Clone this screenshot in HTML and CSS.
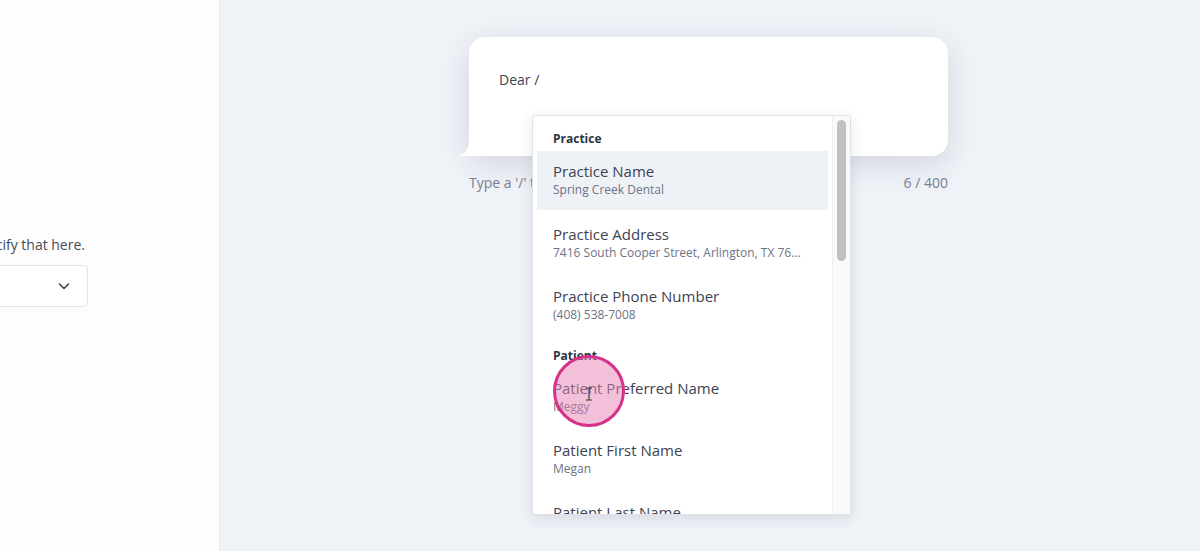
FILE: index.html
```html
<!DOCTYPE html>
<html lang="en">
<head>
    <meta charset="UTF-8">
    <meta name="viewport" content="width=device-width, initial-scale=1.0">
    <title>Message Editor</title>
    <link rel="stylesheet" href="styles.css">
</head>
<body>
    <aside class="side-panel">
        <div class="side-inner">
            <p class="side-hint">If this message is for a specific reason, specify that here.</p>
            <div class="select-box">
                <svg class="chevron" width="14" height="14" viewBox="0 0 14 14"><path d="M2.5 5l4.5 4.5L11.5 5" fill="none" stroke="#3d4354" stroke-width="1.6" stroke-linecap="round" stroke-linejoin="round"/></svg>
            </div>
        </div>
    </aside>

    <main class="editor">
        <div class="composer">
            <div class="bubble">
                <div class="bubble-text">Dear /</div>
                <span class="bubble-tail"></span>
            </div>
            <div class="composer-footer">
                <span>Type a '/' to insert a variable</span>
                <span>6 / 400</span>
            </div>

            <div class="variable-menu">
                <div class="menu-list">
                    <div class="menu-group">Practice</div>
                    <div class="menu-item active">
                        <div class="item-title">Practice Name</div>
                        <div class="item-value">Spring Creek Dental</div>
                    </div>
                    <div class="menu-item">
                        <div class="item-title">Practice Address</div>
                        <div class="item-value">7416 South Cooper Street, Arlington, TX 76...</div>
                    </div>
                    <div class="menu-item">
                        <div class="item-title">Practice Phone Number</div>
                        <div class="item-value">(408) 538-7008</div>
                    </div>
                    <div class="menu-group">Patient</div>
                    <div class="menu-item">
                        <div class="item-title">Patient Preferred Name</div>
                        <div class="item-value">Meggy</div>
                    </div>
                    <div class="menu-item">
                        <div class="item-title">Patient First Name</div>
                        <div class="item-value">Megan</div>
                    </div>
                    <div class="menu-item">
                        <div class="item-title">Patient Last Name</div>
                        <div class="item-value">Smith</div>
                    </div>
                </div>
                <div class="menu-scroll"><div class="menu-thumb"></div></div>
            </div>

            <!-- click marker over the list -->
            <div class="click-ring">
                <svg class="ibeam" width="8" height="14" viewBox="0 0 8 14"><path d="M1 1h6M4 1v12M1 13h6" fill="none" stroke="#3a3a3a" stroke-width="1.2"/></svg>
            </div>
        </div>
    </main>
</body>
</html>
```

FILE: styles.css
```css
* {
    box-sizing: border-box;
}
body {
    margin: 0;
    height: 551px;
    display: flex;
    overflow: hidden;
    font-family: "Open Sans", Arial, sans-serif;
    color: #3d4354;
    background-color: #eff2f7;
}
.side-panel {
    width: 220px;
    flex-shrink: 0;
    background-color: #fdfdfe;
    border-right: 1px solid #e6e9ef;
    overflow: hidden;
}
.side-inner {
    width: 389px;
    margin-left: -301px;
    padding-top: 235px;
}
.side-hint {
    margin: 0 0 10px;
    font-size: 14px;
    line-height: 20px;
    text-align: right;
    white-space: nowrap;
    padding-right: 3px;
    color: #454b5c;
}
.select-box {
    height: 42px;
    border: 1px solid #dfe3ea;
    border-radius: 4px;
    background-color: #fff;
    display: flex;
    align-items: center;
    justify-content: flex-end;
    padding-right: 16px;
}
.editor {
    flex: 1;
    padding: 37px 0 0 249px;
}
.composer {
    position: relative;
    width: 479px;
}
.bubble {
    position: relative;
    height: 119px;
    background-color: #fff;
    border-radius: 16px;
    box-shadow: 0 8px 30px rgba(40, 50, 80, 0.14);
    padding: 33px 30px;
}
.bubble-text {
    font-size: 14px;
    line-height: 20px;
}
.bubble-tail {
    position: absolute;
    left: -11px;
    bottom: 0;
    width: 26px;
    height: 14px;
    background-color: #fff;
    clip-path: path("M0 14 C7 12 11 7 11 0 L26 0 L26 14 Z");
}
.composer-footer {
    display: flex;
    justify-content: space-between;
    padding-top: 17px;
    font-size: 14px;
    line-height: 20px;
    color: #7a8192;
}
.variable-menu {
    position: absolute;
    left: 63px;
    top: 78px;
    width: 319px;
    height: 400px;
    background-color: #fff;
    border: 1px solid #dde1e8;
    border-radius: 3px;
    box-shadow: 0 4px 14px rgba(40, 50, 80, 0.12);
    display: flex;
    overflow: hidden;
}
.menu-list {
    flex: 1;
    padding: 11px 0 0 4px;
    overflow: hidden;
}
.menu-group {
    padding: 3px 0 0 16px;
    height: 24px;
    font-size: 12px;
    font-weight: 700;
    line-height: 18px;
    color: #2f3443;
}
.menu-item + .menu-group {
    margin-top: 6px;
}
.menu-item {
    height: 62px;
    padding: 10px 16px 0;
    margin-right: 4px;
}
.menu-item.active {
    height: 59px;
    margin-bottom: 4px;
    background-color: #eef2f7;
}
.item-title {
    font-size: 15px;
    line-height: 20px;
    color: #3d4354;
}
.item-value {
    font-size: 12px;
    line-height: 17px;
    color: #6c7386;
    white-space: nowrap;
    overflow: hidden;
    text-overflow: ellipsis;
}
.menu-scroll {
    width: 18px;
    border-left: 1px solid #eceef2;
    background-color: #fafafa;
    padding: 4px 4px 0 4px;
}
.menu-thumb {
    width: 9px;
    height: 141px;
    border-radius: 5px;
    background-color: #c1c1c1;
}
.click-ring {
    position: absolute;
    left: 84px;
    top: 318px;
    width: 72px;
    height: 72px;
    border-radius: 50%;
    border: 3px solid #d6328a;
    background-color: rgba(231, 130, 180, 0.5);
    display: flex;
    align-items: center;
    justify-content: center;
}
.ibeam {
    margin-top: 6px;
}
```
